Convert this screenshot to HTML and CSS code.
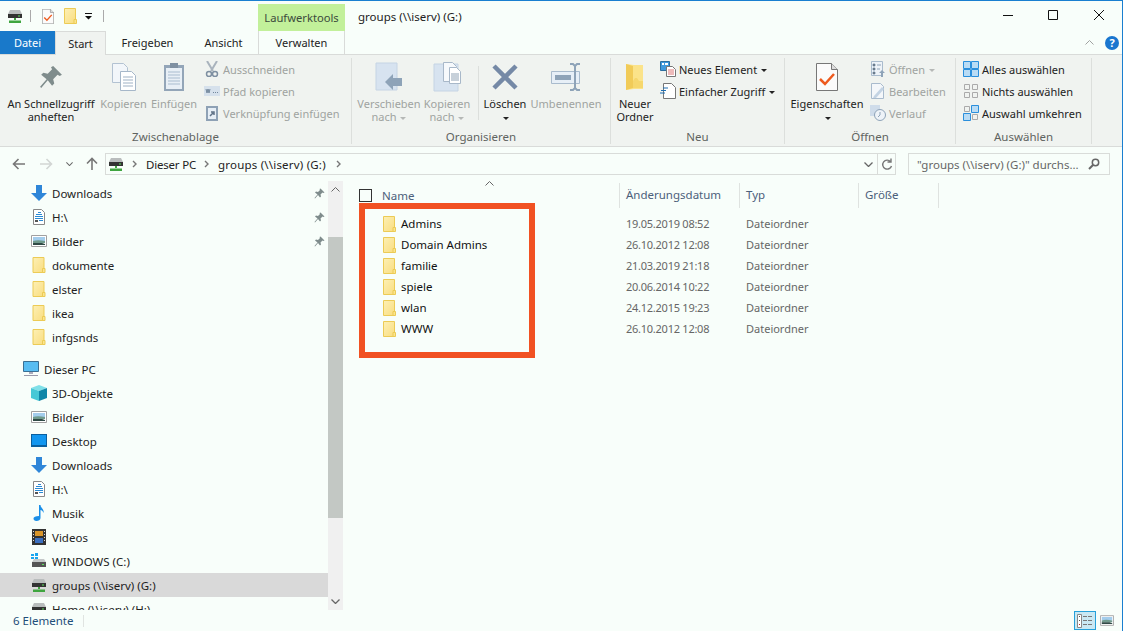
FILE: index.html
```html
<!DOCTYPE html>
<html lang="de">

<head>
    <meta charset="UTF-8">
    <title>groups (\\iserv) (G:)</title>
    <link rel="stylesheet" href="styles.css">
</head>

<body>
    <svg class="defs" width="0" height="0">
        <defs>
            <linearGradient id="fold" x1="0" y1="0" x2="1" y2="1">
                <stop offset="0" stop-color="#fdf0b4" />
                <stop offset="1" stop-color="#f9dd80" />
            </linearGradient>
            <symbol id="folder" viewBox="0 0 13 16">
                <path d="M.5.500h11v15H.5z" fill="url(#fold)" stroke="#eccb55" />
                <path d="M10 15.500v-4h2.500v4z" fill="#fbe58f" stroke="#eccb55" />
            </symbol>
            <symbol id="netdrive" viewBox="0 0 16 16">
                <path d="M1 6l2-4h10l2 4z" fill="#b9bdbd" />
                <path d="M1 6h14v4H1z" fill="#333" />
                <path d="M11 7.500h2v1h-2z" fill="#5be05b" />
                <path d="M7 10h2v2H7zM2 12.500h12V15H2z" fill="#3fa53f" />
            </symbol>
            <symbol id="localdrive" viewBox="0 0 16 16">
                <path d="M1 9l2-3h10l2 3z" fill="#c4c8c8" />
                <path d="M1 9h14v5H1z" fill="#555" />
                <path d="M11 11h2v1h-2z" fill="#5be05b" />
                <path d="M0 1h3v2H0zM4 0h3v3H4zM0 4h3v2H0zM4 4h3v2H4z" fill="#19a5ef" />
            </symbol>
            <symbol id="pin" viewBox="0 0 22 22">
                <path d="M13 1l8 8-2 1-2-1-4 4 1 4-2 2-4-5-6 7-1-1 6-7-5-4 2-2 4 1 4-4-1-2z" fill="#7f8c8c" />
            </symbol>
            <symbol id="pic" viewBox="0 0 16 12">
                <path d="M.5.500h15v11H.5z" fill="#fff" stroke="#a0a0a0" />
                <path d="M2 2h12v4H2z" fill="#a3cdec" />
                <path d="M2 6c3-1 7-1 12 0v2H2z" fill="#6f9a8c" />
                <path d="M2 8h9l3 1v1H2z" fill="#2f4a45" />
            </symbol>
            <symbol id="textdoc" viewBox="0 0 12 16">
                <path d="M.5.500h8l3 3v12H.5z" fill="#fff" stroke="#888" />
                <path d="M5 3h3v1H5zM3 5h6v1H3zM2 7h8v1H2zM2 9h8v1H2zM6 11h4v1H6z" fill="#2a8ad4" />
                <path d="M2 11h3v2H2z" fill="#555" />
            </symbol>
            <symbol id="down" viewBox="0 0 16 16">
                <path d="M5 0h6v8h5l-8 8-8-8h5z" fill="#2f86d8" />
            </symbol>
            <symbol id="checkdoc" viewBox="0 0 22 28">
                <path d="M.5.500h15l6 6v21H.5z" fill="#fbfbfb" stroke="#777" />
                <path d="M15.500.500v6h6" fill="#ddd" stroke="#777" />
                <path d="M4 16l5 5 9-10" fill="none" stroke="#ee5a1e" stroke-width="2.500" />
            </symbol>
            <symbol id="chevup" viewBox="0 0 9 5">
                <path d="M.5 4.500l4-4 4 4" fill="none" stroke="#666" />
            </symbol>
            <symbol id="chevdown" viewBox="0 0 9 5">
                <path d="M.5.500l4 4 4-4" fill="none" stroke="#666" stroke-width="1.300" />
            </symbol>
            <symbol id="crumb" viewBox="0 0 5 8">
                <path d="M1 1l3 3-3 3" fill="none" stroke="#777" stroke-width="1.400" />
            </symbol>
            <symbol id="pane-all" viewBox="0 0 16 16">
                <path d="M.5.500h7v7h-7zM8.500.500h7v7h-7zM.5 8.500h7v7h-7zM8.500 8.500h7v7h-7z" fill="#b9dcf5" stroke="#2a8fdc" />
            </symbol>
            <symbol id="pane-none" viewBox="0 0 16 16">
                <path d="M1.500 1.500h5v5h-5zM9.500 1.500h5v5h-5zM1.500 9.500h5v5h-5zM9.500 9.500h5v5h-5z" fill="none" stroke="#aaa" />
            </symbol>
            <symbol id="pane-inv" viewBox="0 0 16 16">
                <path d="M1.500 1.500h5v5h-5zM9.500 9.500h5v5h-5z" fill="none" stroke="#aaa" />
                <path d="M8.500.500h7v7h-7zM.5 8.500h7v7h-7z" fill="#b9dcf5" stroke="#2a8fdc" />
            </symbol>
        </defs>
    </svg>

    <div class="window">
        <div class="titlebar">
            <div class="qat">
                <svg class="ico-16"><use href="#netdrive" /></svg>
                <span class="qat-sep"></span>
                <svg class="qat-check"><use href="#checkdoc" /></svg>
                <svg class="qat-folder"><use href="#folder" /></svg>
                <svg class="qat-drop" width="7" height="7" viewBox="0 0 7 7"><path d="M0 0h7v1H0zM0 3h7L3.500 6.500z" fill="#111" /></svg>
                <span class="qat-sep"></span>
            </div>
            <div class="context-head">Laufwerktools</div>
            <div class="title">groups (\\iserv) (G:)</div>
            <div class="winctl">
                <svg width="46" height="30"><path d="M19 14.500h10" stroke="#111" /></svg>
                <svg width="46" height="30"><path d="M18.500 9.500h9v9h-9z" fill="none" stroke="#111" /></svg>
                <svg width="46" height="30"><path d="M18 9l10 10M28 9L18 19" stroke="#111" /></svg>
            </div>
        </div>

        <div class="tabs">
            <div class="tab tab-file">Datei</div>
            <div class="tab tab-active">Start</div>
            <div class="tab tab-share">Freigeben</div>
            <div class="tab tab-view">Ansicht</div>
            <div class="tab tab-manage">Verwalten</div>
            <div class="tabs-right">
                <svg class="collapse"><use href="#chevup" /></svg>
                <span class="help">?</span>
            </div>
        </div>

        <div class="ribbon">
            <div class="group group-clip">
                <div class="group-body">
                    <div class="big big-pin">
                        <svg class="big-ico" width="24" height="32"><use href="#pin" /></svg>
                        <span>An Schnellzugriff<br>anheften</span>
                    </div>
                    <div class="big big-copy off">
                        <svg class="big-ico" width="26" height="30" viewBox="0 0 26 30">
                            <path d="M1.500 1.500h11l4 4v15h-15z" fill="#f2f6fa" stroke="#b3c2d2" />
                            <path d="M9.500 9.500h11l4 4v15h-15z" fill="#fff" stroke="#a6b7c9" />
                            <path d="M12 15h10M12 18h10M12 21h10M12 24h10" stroke="#9fb1c4" />
                        </svg>
                        <span>Kopieren</span>
                    </div>
                    <div class="big big-paste off">
                        <svg class="big-ico" width="22" height="30" viewBox="0 0 22 30">
                            <path d="M1 3h20v26H1z" fill="#93a5b8" />
                            <path d="M3 6h16v21H3z" fill="#e8eff6" />
                            <path d="M7 1h8v5H7z" fill="#7f90a2" />
                            <path d="M5 10h12M5 13h12M5 16h12M5 19h12M5 22h12" stroke="#a9bccf" />
                        </svg>
                        <span>Einfügen</span>
                    </div>
                    <div class="small-col off">
                        <div class="small">
                            <svg class="small-ico" width="14" height="16" viewBox="0 0 14 16">
                                <path d="M2 0l6 10M12 0L6 10" stroke="#a9b3bd" stroke-width="2" />
                                <circle cx="4" cy="13" r="2.500" fill="none" stroke="#7e8fa1" stroke-width="1.500" />
                                <circle cx="10" cy="13" r="2.500" fill="none" stroke="#7e8fa1" stroke-width="1.500" />
                            </svg>
                            <span>Ausschneiden</span>
                        </div>
                        <div class="small">
                            <svg class="small-ico" width="16" height="10" viewBox="0 0 16 10">
                                <path d="M0 0h16v10H0z" fill="#d6e1ec" />
                                <path d="M2 3l1 4 1-4 1 4 1-4M9 6.500h1M11 6.500h1M13 6.500h1" fill="none" stroke="#72879c" />
                            </svg>
                            <span>Pfad kopieren</span>
                        </div>
                        <div class="small">
                            <svg class="small-ico" width="14" height="16" viewBox="0 0 14 16">
                                <path d="M1 1h12v15H1z" fill="#8ea1b5" />
                                <path d="M3 3h8v11H3z" fill="#e6eef6" />
                                <path d="M5 11l3-3M6 7h3v3" fill="none" stroke="#5f7287" stroke-width="1.500" />
                            </svg>
                            <span>Verknüpfung einfügen</span>
                        </div>
                    </div>
                </div>
                <div class="group-label">Zwischenablage</div>
            </div>

            <div class="group group-org">
                <div class="group-body">
                    <div class="big big-move off">
                        <svg class="big-ico" width="28" height="28" viewBox="0 0 28 28">
                            <path d="M1 0h21v27H1z" fill="#d7e3f0" stroke="#c5d4e4" />
                            <path d="M10 19l8-8v4h9v8h-9v4z" fill="#8ea3b8" />
                        </svg>
                        <span>Verschieben<br>nach <i class="caret caret-off"></i></span>
                    </div>
                    <div class="big big-copyto off">
                        <svg class="big-ico" width="28" height="30" viewBox="0 0 28 30">
                            <path d="M1 2h24v27H1z" fill="#d7e3f0" stroke="#c5d4e4" />
                            <path d="M10.500.500h9l4 4v15h-13z" fill="#f6f9fc" stroke="#a8b8c9" />
                            <path d="M16.500 5.500h7l4 4v12h-11z" fill="#fff" stroke="#a8b8c9" />
                            <path d="M18 12h8M18 14h8M18 16h8M18 18h8" stroke="#8fa2b5" />
                        </svg>
                        <span>Kopieren<br>nach <i class="caret caret-off"></i></span>
                    </div>
                    <span class="big-sep"></span>
                    <div class="big big-del">
                        <svg class="big-ico" width="26" height="26" viewBox="0 0 26 26">
                            <path d="M2 2l22 22M24 2L2 24" stroke="#7589a6" stroke-width="4.500" />
                        </svg>
                        <span>Löschen<br><i class="caret"></i></span>
                    </div>
                    <div class="big big-ren off">
                        <svg class="big-ico" width="30" height="28" viewBox="0 0 30 28">
                            <path d="M.5 8.500h28v12H.5z" fill="#e7eff7" stroke="#a9bbcd" />
                            <path d="M4 12h16v5H4z" fill="#8ea3b8" />
                            <path d="M19 1h3l2 2 2-2h3M24 3v22M19 27h3l2-2 2 2h3" fill="none" stroke="#8ea3b8" stroke-width="2" />
                        </svg>
                        <span>Umbenennen</span>
                    </div>
                </div>
                <div class="group-label">Organisieren</div>
            </div>

            <div class="group group-new">
                <div class="group-body">
                    <div class="big big-newfolder">
                        <svg class="big-ico" width="20" height="28" viewBox="0 0 20 28">
                            <path d="M1 1l8 1 9 0v24H9l-8 1z" fill="#fbe38a" />
                            <path d="M1 1l7 2v22l-7 2z" fill="#f1cb58" />
                            <path d="M8 18l2-3h2l2 3h4v7H8z" fill="#f6d76d" />
                        </svg>
                        <span>Neuer<br>Ordner</span>
                    </div>
                    <div class="small-col">
                        <div class="small">
                            <svg class="small-ico" width="16" height="16" viewBox="0 0 16 16">
                                <path d="M.5.500h9v9h-9z" fill="#3f9ade" stroke="#2b6e9f" />
                                <path d="M2 2h2v2H2zM5 2h3v2H5z" fill="#fff" />
                                <path d="M6.500 5.500h6l3 3v7h-9z" fill="#fff" stroke="#777" />
                                <path d="M8 9h6M8 11h6M8 13h6" stroke="#d77" />
                            </svg>
                            <span>Neues Element <i class="caret"></i></span>
                        </div>
                        <div class="small">
                            <svg class="small-ico" width="16" height="16" viewBox="0 0 16 16">
                                <path d="M3.500.500h8l4 4v11h-12z" fill="#fff" stroke="#777" />
                                <path d="M3 5h5M1 7.500h5M0 10h5" stroke="#1f6fb3" stroke-width="1.200" />
                            </svg>
                            <span>Einfacher Zugriff <i class="caret"></i></span>
                        </div>
                    </div>
                </div>
                <div class="group-label">Neu</div>
            </div>

            <div class="group group-open">
                <div class="group-body">
                    <div class="big big-prop">
                        <svg class="big-ico" width="22" height="28"><use href="#checkdoc" /></svg>
                        <span>Eigenschaften<br><i class="caret"></i></span>
                    </div>
                    <div class="small-col off">
                        <div class="small">
                            <svg class="small-ico" width="14" height="16" viewBox="0 0 14 16">
                                <path d="M.5.500h11v14H.5z" fill="#eef3f8" stroke="#a9bbcd" />
                                <path d="M2 3h2v2H2zM2 7h2v2H2zM2 11h2v2H2zM6 4h4M6 8h3" stroke="#8ea3b8" />
                                <path d="M10 16v-4H8l3-3 3 3h-2v4z" fill="#8ea3b8" />
                            </svg>
                            <span>Öffnen <i class="caret caret-off"></i></span>
                        </div>
                        <div class="small">
                            <svg class="small-ico" width="14" height="16" viewBox="0 0 14 16">
                                <path d="M.5.500h9l3 3v12H.5z" fill="#f4f7fa" stroke="#a9bbcd" />
                                <path d="M3 13l8-9 2 2-8 9-3 0z" fill="#c3d3e3" />
                            </svg>
                            <span>Bearbeiten</span>
                        </div>
                        <div class="small">
                            <svg class="small-ico" width="16" height="16" viewBox="0 0 16 16">
                                <path d="M0 0h10v11H0z" fill="#cfdcea" />
                                <circle cx="10" cy="10" r="5.500" fill="#eef3f8" stroke="#8ea3b8" />
                                <path d="M10 7v3l-2 2" fill="none" stroke="#8ea3b8" />
                            </svg>
                            <span>Verlauf</span>
                        </div>
                    </div>
                </div>
                <div class="group-label">Öffnen</div>
            </div>

            <div class="group group-select">
                <div class="group-body">
                    <div class="small-col">
                        <div class="small">
                            <svg class="small-ico" width="16" height="16"><use href="#pane-all" /></svg>
                            <span>Alles auswählen</span>
                        </div>
                        <div class="small">
                            <svg class="small-ico" width="16" height="16"><use href="#pane-none" /></svg>
                            <span>Nichts auswählen</span>
                        </div>
                        <div class="small">
                            <svg class="small-ico" width="16" height="16"><use href="#pane-inv" /></svg>
                            <span>Auswahl umkehren</span>
                        </div>
                    </div>
                </div>
                <div class="group-label">Auswählen</div>
            </div>
        </div>

        <div class="addressrow">
            <div class="navbtns">
                <svg width="14" height="12" viewBox="0 0 14 12"><path d="M13 6H2M6.500 1L1.500 6l5 5" fill="none" stroke="#777" stroke-width="1.600" /></svg>
                <svg width="14" height="12" viewBox="0 0 14 12"><path d="M1 6h11M7.500 1l5 5-5 5" fill="none" stroke="#d2d6d4" stroke-width="1.600" /></svg>
                <svg width="7" height="4"><use href="#chevdown" /></svg>
                <svg width="12" height="14" viewBox="0 0 12 14"><path d="M6 13V2M1 6.500l5-5 5 5" fill="none" stroke="#777" stroke-width="1.600" /></svg>
            </div>
            <div class="addressbar">
                <svg class="ico-16"><use href="#netdrive" /></svg>
                <svg class="crumb"><use href="#crumb" /></svg>
                <span class="addr-pc">Dieser PC</span>
                <svg class="crumb"><use href="#crumb" /></svg>
                <span class="addr-drive">groups (\\iserv) (G:)</span>
                <svg class="crumb"><use href="#crumb" /></svg>
                <svg class="addr-drop"><use href="#chevdown" /></svg>
                <span class="addr-refresh">
                    <svg width="12" height="13" viewBox="0 0 12 13"><path d="M9.500 3.500A4.500 4.500 0 1 0 10.500 8M10 .5v3.500H6.500" fill="none" stroke="#777" stroke-width="1.400" /></svg>
                </span>
            </div>
            <div class="searchbox">
                <span>"groups (\\iserv) (G:)" durchs...</span>
                <svg width="12" height="12" viewBox="0 0 12 12"><circle cx="7.500" cy="4.500" r="3.200" fill="none" stroke="#666" stroke-width="1.500" /><path d="M5 7l-4 4" stroke="#666" stroke-width="2" /></svg>
            </div>
        </div>

        <div class="main">
            <div class="nav">
                <div class="navrow"><svg class="ico-16"><use href="#down" /></svg><span>Downloads</span><svg class="nav-pin"><use href="#pin" /></svg></div>
                <div class="navrow"><svg class="ico-16"><use href="#textdoc" /></svg><span>H:\</span><svg class="nav-pin"><use href="#pin" /></svg></div>
                <div class="navrow"><svg class="ico-16"><use href="#pic" /></svg><span>Bilder</span><svg class="nav-pin"><use href="#pin" /></svg></div>
                <div class="navrow"><svg class="ico-16"><use href="#folder" /></svg><span>dokumente</span></div>
                <div class="navrow"><svg class="ico-16"><use href="#folder" /></svg><span>elster</span></div>
                <div class="navrow"><svg class="ico-16"><use href="#folder" /></svg><span>ikea</span></div>
                <div class="navrow"><svg class="ico-16"><use href="#folder" /></svg><span>infgsnds</span></div>
                <div class="navrow navrow-top">
                    <svg class="ico-16" viewBox="0 0 16 16">
                        <path d="M.5.500h15v10H.5z" fill="#58bdf2" stroke="#3a6f93" />
                        <path d="M6 11h4v2H6z" fill="#aab" />
                        <path d="M1 14h14v1H1z" fill="#99a" />
                    </svg>
                    <span>Dieser PC</span>
                </div>
                <div class="navrow">
                    <svg class="ico-16" viewBox="0 0 16 16">
                        <path d="M8 0l8 3-8 3-8-3z" fill="#7fe0e8" />
                        <path d="M0 3l8 3v10l-8-3z" fill="#47c8d6" />
                        <path d="M16 3L8 6v10l8-3z" fill="#0f86a8" />
                    </svg>
                    <span>3D-Objekte</span>
                </div>
                <div class="navrow"><svg class="ico-16"><use href="#pic" /></svg><span>Bilder</span></div>
                <div class="navrow">
                    <svg class="ico-16" viewBox="0 0 16 16">
                        <path d="M0 1h16v13H0z" fill="#0a5f9e" />
                        <path d="M1 2h14v10H1z" fill="#1296ef" />
                    </svg>
                    <span>Desktop</span>
                </div>
                <div class="navrow"><svg class="ico-16"><use href="#down" /></svg><span>Downloads</span></div>
                <div class="navrow"><svg class="ico-16"><use href="#textdoc" /></svg><span>H:\</span></div>
                <div class="navrow">
                    <svg class="ico-16" viewBox="0 0 16 16">
                        <path d="M8 0h1.500c0 3 4 4 3 8-.5-2-2-3-3-3v8c0 2-2 3-4 3s-3-1-3-2.500S4.500 11 8 11z" fill="#1a8fe8" />
                    </svg>
                    <span>Musik</span>
                </div>
                <div class="navrow">
                    <svg class="ico-16" viewBox="0 0 16 16">
                        <path d="M1 0h14v16H1z" fill="#333" />
                        <path d="M4 2h8v5H4z" fill="#d8952a" />
                        <path d="M4 9h8v5H4z" fill="#3b6fc0" />
                        <path d="M2 2h1v1H2zM2 5h1v1H2zM2 8h1v1H2zM2 11h1v1H2zM13 2h1v1h-1zM13 5h1v1h-1zM13 8h1v1h-1zM13 11h1v1h-1z" fill="#ddd" />
                    </svg>
                    <span>Videos</span>
                </div>
                <div class="navrow"><svg class="ico-16"><use href="#localdrive" /></svg><span>WINDOWS (C:)</span></div>
                <div class="navrow navrow-sel"><svg class="ico-16"><use href="#netdrive" /></svg><span>groups (\\iserv) (G:)</span></div>
                <div class="navrow"><svg class="ico-16"><use href="#netdrive" /></svg><span>Home (\\iserv) (H:)</span></div>
            </div>
            <div class="scrollbar">
                <svg class="sb-arrow"><use href="#chevup" /></svg>
                <div class="sb-track"><div class="sb-thumb"></div></div>
                <svg class="sb-arrow"><use href="#chevdown" /></svg>
            </div>

            <div class="list">
                <div class="list-head">
                    <div class="col col-name">
                        <span class="checkbox"></span>
                        <span>Name</span>
                        <svg class="sort"><use href="#chevup" /></svg>
                    </div>
                    <div class="col">Änderungsdatum</div>
                    <div class="col">Typ</div>
                    <div class="col">Größe</div>
                </div>
                <div class="file"><div class="file-name"><svg class="ico-file"><use href="#folder" /></svg>Admins</div><div class="file-date">19.05.2019 08:52</div><div class="file-type">Dateiordner</div></div>
                <div class="file"><div class="file-name"><svg class="ico-file"><use href="#folder" /></svg>Domain Admins</div><div class="file-date">26.10.2012 12:08</div><div class="file-type">Dateiordner</div></div>
                <div class="file"><div class="file-name"><svg class="ico-file"><use href="#folder" /></svg>familie</div><div class="file-date">21.03.2019 21:18</div><div class="file-type">Dateiordner</div></div>
                <div class="file"><div class="file-name"><svg class="ico-file"><use href="#folder" /></svg>spiele</div><div class="file-date">20.06.2014 10:22</div><div class="file-type">Dateiordner</div></div>
                <div class="file"><div class="file-name"><svg class="ico-file"><use href="#folder" /></svg>wlan</div><div class="file-date">24.12.2015 19:23</div><div class="file-type">Dateiordner</div></div>
                <div class="file"><div class="file-name"><svg class="ico-file"><use href="#folder" /></svg>WWW</div><div class="file-date">26.10.2012 12:08</div><div class="file-type">Dateiordner</div></div>
                <div class="highlight"></div>
            </div>
        </div>

        <div class="statusbar">
            <span class="status-text">6 Elemente</span>
            <span class="status-sep"></span>
            <span class="view-btn view-on">
                <svg width="16" height="14" viewBox="0 0 16 14">
                    <path d="M.5.500h4v13h-4z" fill="#fff" stroke="#888" />
                    <path d="M2 2h1v1H2zM2 6h1v1H2z" fill="#555" />
                    <path d="M2 10h1v1H2z" fill="#c22" />
                    <path d="M6 2.500h4M11 2.500h4M6 6.500h4M11 6.500h4M6 10.500h4M11 10.500h4" stroke="#777" />
                </svg>
            </span>
            <svg class="view-thumb"><use href="#pic" /></svg>
        </div>
    </div>
</body>

</html>
```

FILE: styles.css
```css
html,
body {
    margin: 0;
    height: 100%;
    background: #fff;
}

body {
    font-family: "Noto Sans", sans-serif;
    font-size: 11.5px;
    color: #222;
    overflow: hidden;
}

svg {
    flex: none;
    display: block;
}

.defs {
    position: absolute;
}

.window {
    width: 1122px;
    height: 630px;
    border-top: 1px solid #1a7fd0;
    border-right: 1px solid #1a7fd0;
    background: #f8fefa;
    display: flex;
    flex-direction: column;
    overflow: hidden;
}

.ico-16 {
    width: 16px;
    height: 16px;
}

/* title bar */
.titlebar {
    height: 30px;
    display: flex;
    align-items: center;
}

.qat {
    width: 258px;
    padding-left: 7px;
    box-sizing: border-box;
    display: flex;
    align-items: center;
}

.qat-sep {
    width: 1px;
    height: 12px;
    background: #aaa;
    margin: 0 0 0 7px;
}

.qat-check {
    width: 12px;
    height: 15px;
    margin-left: 11px;
}

.qat-folder {
    width: 13px;
    height: 16px;
    margin-left: 10px;
}

.qat-drop {
    margin-left: 8px;
    margin-right: 4px;
}

.context-head {
    width: 87px;
    height: 27px;
    margin-top: 3px;
    background: #c2f09a;
    text-align: center;
    line-height: 27px;
    font-size: 11.2px;
    color: #3c4a3c;
}

.title {
    margin-left: 13px;
    flex: 1;
}

.winctl {
    display: flex;
}

/* tabs */
.tabs {
    height: 23px;
    display: flex;
    font-size: 11px;
    border-bottom: 1px solid #d9dbd9;
}

.tab {
    line-height: 23px;
    text-align: center;
}

.tab-file {
    width: 55px;
    background: #1979ca;
    color: #fff;
}

.tab-active {
    width: 51px;
    height: 24px;
    box-sizing: border-box;
    background: #f0f3f0;
    border: 1px solid #d9dbd9;
    border-bottom: none;
}

.tab-share {
    width: 83px;
}

.tab-view {
    width: 69px;
}

.tab-manage {
    width: 87px;
    box-sizing: border-box;
    border-left: 1px solid #d9dbd9;
    border-right: 1px solid #d9dbd9;
}

.tabs-right {
    flex: 1;
    display: flex;
    justify-content: flex-end;
    align-items: center;
    padding-right: 3px;
}

.collapse {
    width: 9px;
    height: 5px;
    margin-right: 11px;
    opacity: .6;
}

.help {
    width: 14px;
    height: 14px;
    border-radius: 50%;
    background: #1a76cf;
    color: #fff;
    font-size: 11px;
    font-weight: bold;
    line-height: 14px;
    text-align: center;
}

/* ribbon */
.ribbon {
    height: 91px;
    background: #f0f3f0;
    border-bottom: 1px solid #d9dbd9;
    display: flex;
    font-size: 11px;
}

.group {
    box-sizing: border-box;
    height: 86px;
    margin-top: 3px;
    border-right: 1px solid #dcdfdc;
    display: flex;
    flex-direction: column;
}

.group-clip {
    width: 352px;
}

.group-org {
    width: 259px;
}

.group-new {
    width: 174px;
}

.group-open {
    width: 171px;
}

.group-select {
    width: 136px;
}

.group-body {
    flex: 1;
    display: flex;
}

.group-label {
    height: 18px;
    line-height: 22px;
    text-align: center;
    font-size: 11.5px;
    color: #5f6360;
}

.big {
    display: flex;
    flex-direction: column;
    align-items: center;
    text-align: center;
    line-height: 13px;
    flex: none;
}

.big-ico {
    height: 32px;
    margin: 3px 0 4px;
}

.big-pin {
    width: 102px;
}

.big-copy {
    width: 49px;
    margin-left: -3px;
}

.big-paste {
    width: 52px;
}

.big-move {
    width: 66px;
    margin-left: 4px;
}

.big-copyto {
    width: 50px;
}

.big-sep {
    width: 1px;
    height: 54px;
    margin: 8px 0 0 6px;
    background: #dcdfdc;
}

.big-del {
    width: 52px;
}

.big-ren {
    width: 70px;
}

.big-newfolder {
    width: 48px;
}

.big-prop {
    width: 84px;
}

.off {
    color: #9fa3a0;
}

.small-col {
    display: flex;
    flex-direction: column;
}

.group-clip .small-col {
    padding-left: 4px;
}

.group-new .small-col {
    padding-left: 1px;
}

.group-open .small-col {
    padding-left: 1px;
}

.group-select .small-col {
    padding-left: 7px;
}

.small {
    height: 22px;
    display: flex;
    align-items: center;
    white-space: nowrap;
}

.small-ico {
    width: 16px;
    margin-right: 3px;
}

.caret {
    display: inline-block;
    width: 0;
    height: 0;
    margin-left: 1px;
    vertical-align: middle;
    border-left: 3px solid transparent;
    border-right: 3px solid transparent;
    border-top: 3px solid #222;
}

.caret-off {
    border-top-color: #b5b8b6;
}

/* address row */
.addressrow {
    height: 34px;
    display: flex;
    align-items: flex-start;
    padding-top: 6px;
    box-sizing: border-box;
}

.navbtns {
    width: 105px;
    height: 22px;
    padding-left: 12px;
    box-sizing: border-box;
    display: flex;
    align-items: center;
    gap: 13px;
}

.addressbar {
    width: 791px;
    height: 22px;
    box-sizing: border-box;
    border: 1px solid #d9dcd9;
    display: flex;
    align-items: center;
    padding-left: 2px;
}

.crumb {
    width: 5px;
    height: 8px;
    margin: 0 9px 0 8px;
}

.addr-pc {
    letter-spacing: -.2px;
}

.addr-drive {
    letter-spacing: .2px;
    margin-right: 2px;
}

.addr-drop {
    width: 9px;
    height: 5px;
    margin-left: auto;
    margin-right: 4px;
}

.addr-refresh {
    width: 17px;
    height: 20px;
    border-left: 1px solid #d9dcd9;
    display: flex;
    align-items: center;
    justify-content: center;
}

.searchbox {
    width: 202px;
    height: 22px;
    margin-left: 12px;
    box-sizing: border-box;
    border: 1px solid #d9dcd9;
    display: flex;
    align-items: center;
    justify-content: space-between;
    padding: 0 9px 0 8px;
    color: #666;
    white-space: nowrap;
}

/* main area */
.main {
    height: 429px;
    display: flex;
}

.nav {
    width: 328px;
    overflow: hidden;
}

.navrow {
    height: 24px;
    padding-left: 31px;
    display: flex;
    align-items: center;
    gap: 5px;
    white-space: nowrap;
}

.navrow-top {
    margin-top: 8px;
    padding-left: 23px;
}

.navrow-sel {
    background: #d9d9d9;
}

.nav-pin {
    width: 11px;
    height: 11px;
    margin-left: auto;
    margin-right: 3px;
}

.scrollbar {
    width: 15px;
    height: 429px;
    background: #f0f0f0;
    display: flex;
    flex-direction: column;
    align-items: center;
}

.sb-arrow {
    width: 9px;
    height: 5px;
    margin: 6px 0;
}

.sb-track {
    flex: 1;
    width: 15px;
}

.sb-thumb {
    width: 15px;
    height: 281px;
    margin-top: 39px;
    background: #c3c8c4;
}

.list {
    flex: 1;
    margin-left: 1px;
    position: relative;
}

.list-head,
.file {
    display: grid;
    grid-template-columns: 276px 120px 119px 80px;
}

.list-head {
    height: 25px;
    margin-top: 2px;
    margin-bottom: 5px;
    color: #4c607a;
}

.col {
    border-right: 1px solid #dfe3e0;
    padding-left: 6px;
    line-height: 24px;
}

.col-name {
    display: flex;
    align-items: center;
    padding-left: 15px;
    position: relative;
}

.checkbox {
    width: 11px;
    height: 11px;
    border: 1px solid #333;
    margin-right: 10px;
}

.sort {
    position: absolute;
    left: 141px;
    top: -2px;
    width: 9px;
    height: 5px;
}

.file {
    height: 21px;
    align-items: center;
    color: #666;
}

.file > div {
    padding-left: 6px;
}

.file > .file-name {
    display: flex;
    align-items: center;
    padding-left: 39px;
    color: #111;
}

.file-date {
    font-size: 11px;
    letter-spacing: -.25px;
    white-space: nowrap;
}

.file-type {
    font-size: 11px;
}

.ico-file {
    width: 13px;
    height: 16px;
    margin-right: 5px;
}

.highlight {
    position: absolute;
    left: 15px;
    top: 22px;
    width: 164px;
    height: 143px;
    border: 6px solid #f15122;
}

/* status bar */
.statusbar {
    height: 21px;
    display: flex;
    align-items: center;
    padding-left: 13px;
}

.status-text {
    color: #1f4e79;
}

.status-sep {
    width: 1px;
    height: 12px;
    margin-left: 10px;
    margin-right: auto;
    background: #e0e4e1;
}

.view-btn {
    width: 22px;
    height: 19px;
    box-sizing: border-box;
    display: flex;
    align-items: center;
    justify-content: center;
}

.view-on {
    background: #c9e8f3;
    border: 1px solid #26a0da;
}

.view-thumb {
    width: 14px;
    height: 11px;
    margin: 0 8px 0 4px;
}
```
